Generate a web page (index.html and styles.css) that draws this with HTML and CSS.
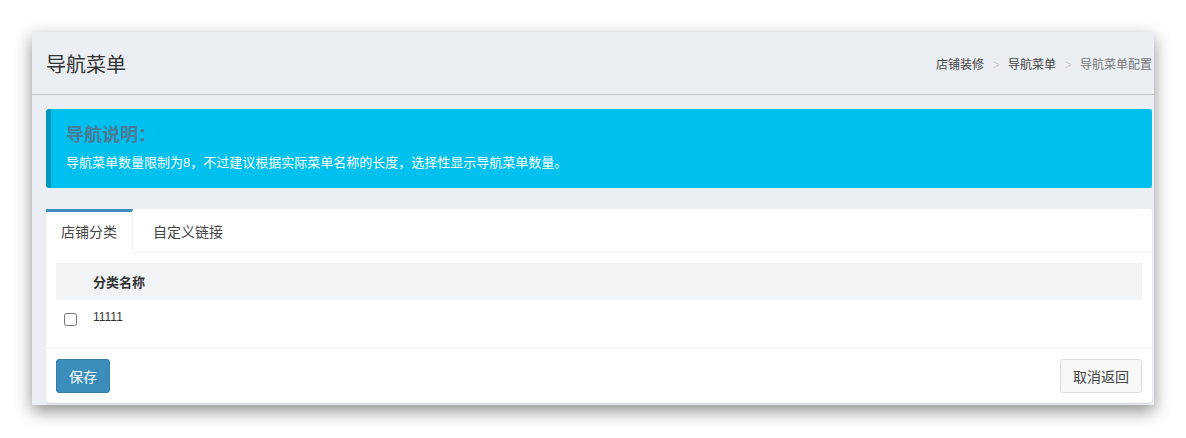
FILE: index.html
```html
<!DOCTYPE html>
<html lang="zh-CN">
<head>
    <meta charset="UTF-8">
    <title>导航菜单</title>
    <link rel="stylesheet" href="styles.css">
</head>
<body>

    <div class="window">
        <header class="page-header">
            <h1>导航菜单</h1>
            <ol class="breadcrumb">
                <li><a href="#">店铺装修</a></li>
                <li><a href="#">导航菜单</a></li>
                <li class="active">导航菜单配置</li>
            </ol>
        </header>

        <section class="content">
            <div class="callout">
                <h4>导航说明：</h4>
                <p>导航菜单数量限制为8，不过建议根据实际菜单名称的长度，选择性显示导航菜单数量。</p>
            </div>

            <div class="tab-box">
                <ul class="tabs">
                    <li class="active">店铺分类</li>
                    <li>自定义链接</li>
                </ul>

                <div class="tab-pane">
                    <table class="table">
                        <thead>
                            <tr>
                                <th class="col-check"></th>
                                <th>分类名称</th>
                            </tr>
                        </thead>
                        <tbody>
                            <tr>
                                <td class="col-check"><input type="checkbox"></td>
                                <td>11111</td>
                            </tr>
                        </tbody>
                    </table>
                </div>

                <div class="box-footer">
                    <button class="btn btn-primary">保存</button>
                    <button class="btn btn-default">取消返回</button>
                </div>
            </div>
        </section>
    </div>

</body>
</html>
```

FILE: styles.css
```css
body {
    margin: 0;
    padding: 0;
    background: #fff;
    font-family: "Liberation Sans", "Noto Sans CJK SC", sans-serif;
    color: #333;
}

.window {
    margin: 32px;
    width: 1122px;
    height: 373px;
    background-color: #ebeef3;
    box-shadow: 0 6px 16px rgba(0, 0, 0, 0.45);
    overflow: hidden;
}

.page-header {
    height: 62px;
    border-bottom: 1px solid #c4c6ca;
    display: flex;
    align-items: center;
    justify-content: space-between;
    padding: 0 2px 0 14px;
}

.page-header h1 {
    margin: 0;
    font-size: 20px;
    font-weight: normal;
    color: #333;
}

.breadcrumb {
    list-style: none;
    margin: 0;
    padding: 0;
    display: flex;
    font-size: 12px;
}

.breadcrumb li + li:before {
    content: ">";
    color: #ccc;
    padding: 0 8px 0 9px;
}

.breadcrumb a {
    color: #444;
    text-decoration: none;
}

.breadcrumb .active {
    color: #777;
}

.content {
    padding: 14px 2px 0 14px;
}

.callout {
    height: 79px;
    box-sizing: border-box;
    background-color: #00c0ef;
    border-left: 5px solid #0097bc;
    border-radius: 3px;
    padding: 14px 15px 0 15px;
}

.callout h4 {
    margin: 0;
    font-size: 18px;
    line-height: 24px;
    color: #4a7b97;
}

.callout p {
    margin: 6px 0 0;
    font-size: 13px;
    line-height: 20px;
    color: #fff;
}

.tab-box {
    margin-top: 21px;
    background: #fff;
    border-radius: 3px;
    box-shadow: 0 1px 1px rgba(0, 0, 0, 0.1);
}

.tabs {
    list-style: none;
    margin: 0;
    padding: 0;
    display: flex;
    border-bottom: 1px solid #f4f4f4;
}

.tabs li {
    font-size: 14px;
    line-height: 20px;
    padding: 10px 15px;
    margin-right: 5px;
    color: #444;
    border-top: 3px solid transparent;
}

.tabs li.active {
    border-top-color: #3c8dbc;
    border-right: 1px solid #f4f4f4;
    margin-bottom: -1px;
    background: #fff;
}

.tab-pane {
    padding: 10px 10px 8px;
}

.table {
    width: 100%;
    border-collapse: collapse;
    font-size: 12px;
}

.table th {
    background: #f2f3f5;
    height: 37px;
    text-align: left;
    font-size: 13px;
    color: #333;
    padding: 0;
}

.table td {
    height: 40px;
    padding: 0;
    vertical-align: top;
    padding-top: 10px;
    box-sizing: border-box;
    color: #333;
}

.col-check {
    width: 37px;
}

.col-check input {
    margin: 3px 0 0 8px;
    width: 13px;
    height: 13px;
}

.box-footer {
    border-top: 1px solid #f4f4f4;
    padding: 10px;
    display: flex;
    justify-content: space-between;
}

.btn {
    height: 34px;
    padding: 0 12px;
    font-size: 14px;
    font-family: inherit;
    border-radius: 3px;
    border: 1px solid transparent;
    cursor: pointer;
}

.btn-primary {
    background-color: #3c8dbc;
    border-color: #367fa9;
    color: #fff;
}

.btn-default {
    background-color: #f8f8f8;
    border-color: #ddd;
    color: #444;
}
```
